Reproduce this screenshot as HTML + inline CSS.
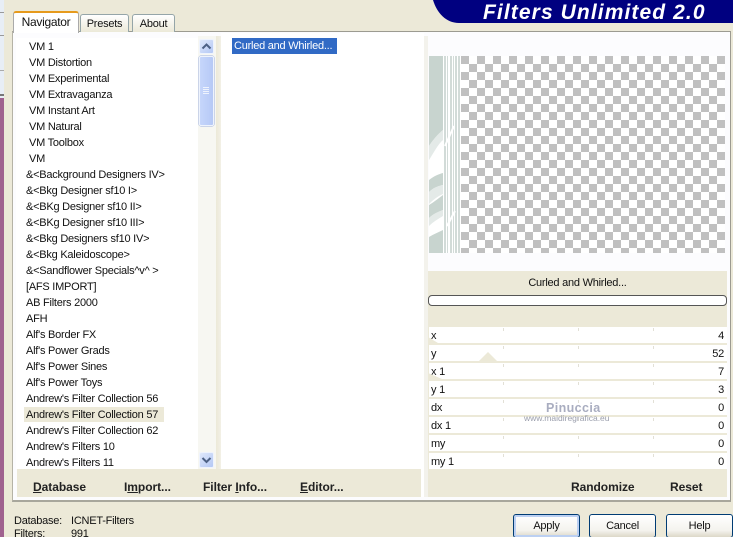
<!DOCTYPE html>
<html style="overflow:hidden"><head><meta charset="utf-8"><style>
html,body{margin:0;padding:0;width:733px;height:537px}
body{overflow:hidden;background:#ece9d8}
#root{position:absolute;left:0;top:0;width:733px;height:537px;overflow:hidden;background:#ece9d8;font-family:"Liberation Sans",sans-serif;font-size:11px;letter-spacing:-.24px;color:#111}
#root div{position:absolute;box-sizing:border-box}
.l{left:0;height:16px;line-height:18px;white-space:nowrap}
.b{font-weight:bold;font-size:12px;letter-spacing:-.05px;white-space:nowrap;top:480px;height:14px;line-height:14px;color:#222}
.r{left:429px;width:298px;height:16px;background:#fff}
.t{position:absolute;left:2px;top:0;line-height:18px}
.v{position:absolute;right:3px;top:0;line-height:18px}
.btn{top:514px;height:24px;border:1px solid #003c74;border-radius:3px;background:linear-gradient(#fff,#f4f3ee 70%,#dcd8c8);text-align:center;line-height:23px;font-size:11px}
.tab{text-align:center;font-size:11px}
u{text-decoration:underline}
</style></head><body><div id="root">
<div style="left:0;top:0;width:4px;height:98px;background:#e8eef6"></div>
<div style="left:0;top:12px;width:4px;height:1px;background:#999"></div>
<div style="left:0;top:35px;width:4px;height:1px;background:#999"></div>
<div style="left:0;top:70px;width:4px;height:1px;background:#aaa"></div>
<div style="left:0;top:94px;width:4px;height:2px;background:#777"></div>
<div style="left:0;top:98px;width:4px;height:439px;background:#a0628f"></div>

<!-- panel -->
<div style="left:12px;top:31px;width:719px;height:471px;background:#fcfcfe;border:1px solid #9c9b91;border-left-color:#b5b3a6;border-bottom:2px solid #a8a79c"></div>
<!-- tabs -->
<div class="tab" style="left:13px;top:11px;width:66px;height:22px;background:#fff;border-left:1px solid #aaa;border-right:1px solid #aaa;border-top:2px solid #e69a1c;border-radius:3px 3px 0 0;line-height:19px;font-size:12px;letter-spacing:-.3px">Navigator</div>
<div class="tab" style="left:80px;top:14px;width:49px;height:18px;background:linear-gradient(#fff,#ece9d8);border:1px solid #95a5a8;border-bottom:0;border-radius:3px 3px 0 0;line-height:18px">Presets</div>
<div class="tab" style="left:132px;top:14px;width:43px;height:18px;background:linear-gradient(#fff,#ece9d8);border:1px solid #95a5a8;border-bottom:0;border-radius:3px 3px 0 0;line-height:18px">About</div>

<!-- banner -->
<svg style="position:absolute;left:432px;top:0" width="301" height="24"><path d="M1 0H301V23H27C14 23 5 13 1 0Z" fill="#000080"/></svg>
<div style="left:483px;top:0;height:24px;line-height:25px;font-size:21px;font-weight:bold;font-style:italic;color:#fff;white-space:nowrap;letter-spacing:1.1px">Filters Unlimited 2.0</div>

<!-- main list -->
<div style="left:16px;top:38px;width:182px;height:431px;overflow:hidden;background:#fff">
<div class="l" style="top:0;padding-left:13px">VM 1</div>
<div class="l" style="top:16px;padding-left:13px">VM Distortion</div>
<div class="l" style="top:32px;padding-left:13px">VM Experimental</div>
<div class="l" style="top:48px;padding-left:13px">VM Extravaganza</div>
<div class="l" style="top:64px;padding-left:13px">VM Instant Art</div>
<div class="l" style="top:80px;padding-left:13px">VM Natural</div>
<div class="l" style="top:96px;padding-left:13px">VM Toolbox</div>
<div class="l" style="top:112px;padding-left:13px">VM</div>
<div class="l" style="top:128px;padding-left:10px">&amp;&lt;Background Designers IV&gt;</div>
<div class="l" style="top:144px;padding-left:10px">&amp;&lt;Bkg Designer sf10 I&gt;</div>
<div class="l" style="top:160px;padding-left:10px">&amp;&lt;BKg Designer sf10 II&gt;</div>
<div class="l" style="top:176px;padding-left:10px">&amp;&lt;BKg Designer sf10 III&gt;</div>
<div class="l" style="top:192px;padding-left:10px">&amp;&lt;Bkg Designers sf10 IV&gt;</div>
<div class="l" style="top:208px;padding-left:10px">&amp;&lt;Bkg Kaleidoscope&gt;</div>
<div class="l" style="top:224px;padding-left:10px">&amp;&lt;Sandflower Specials^v^ &gt;</div>
<div class="l" style="top:240px;padding-left:10px">[AFS IMPORT]</div>
<div class="l" style="top:256px;padding-left:10px">AB Filters 2000</div>
<div class="l" style="top:272px;padding-left:10px">AFH</div>
<div class="l" style="top:288px;padding-left:10px">Alf's Border FX</div>
<div class="l" style="top:304px;padding-left:10px">Alf's Power Grads</div>
<div class="l" style="top:320px;padding-left:10px">Alf's Power Sines</div>
<div class="l" style="top:336px;padding-left:10px">Alf's Power Toys</div>
<div class="l" style="top:352px;padding-left:10px">Andrew's Filter Collection 56</div>
<div style="left:8px;top:369px;width:140px;height:15px;background:#ece9d8"></div>
<div class="l" style="top:368px;padding-left:10px">Andrew's Filter Collection 57</div>
<div class="l" style="top:384px;padding-left:10px">Andrew's Filter Collection 62</div>
<div class="l" style="top:400px;padding-left:10px">Andrew's Filters 10</div>
<div class="l" style="top:416px;padding-left:10px">Andrew's Filters 11</div>
</div>

<!-- scrollbar -->
<div style="left:198px;top:36px;width:18px;height:433px;background:#f7f7f2"></div>
<div style="left:199px;top:39px;width:15px;height:15px;background:linear-gradient(135deg,#dfe8fb,#b4c8f5);border:1px solid #eef3fd;border-radius:2px"></div>
<svg style="position:absolute;left:199px;top:39px" width="15" height="15"><path d="M3.5 9.5L7.5 5.5L11.5 9.5" fill="none" stroke="#4d6185" stroke-width="2"/></svg>
<div style="left:199px;top:56px;width:15px;height:70px;background:linear-gradient(90deg,#c6d6fb,#b6c9f6);border:1px solid #eef3fd;border-radius:2px;box-shadow:0 0 0 .5px #9fb2dd"></div>
<svg style="position:absolute;left:199px;top:56px" width="15" height="70"><path d="M4 31.500H10M4 33.500H10M4 35.500H10M4 37.500H10" stroke="#eef3fd" stroke-width="1"/></svg>
<div style="left:199px;top:452px;width:15px;height:16px;background:linear-gradient(135deg,#dfe8fb,#b4c8f5);border:1px solid #eef3fd;border-radius:2px"></div>
<svg style="position:absolute;left:199px;top:452px" width="15" height="16"><path d="M3.5 6L7.5 10L11.5 6" fill="none" stroke="#4d6185" stroke-width="2"/></svg>
<div style="left:216px;top:36px;width:5px;height:433px;background:linear-gradient(90deg,#ece9d8,#f2f0e6)"></div>

<!-- middle list -->
<div style="left:221px;top:33px;width:200px;height:436px;background:#fff"></div>
<div style="left:232px;top:38px;width:105px;height:16px;background:#316ac5;color:#fff;line-height:17px;padding-left:2px;white-space:nowrap;overflow:hidden">Curled and Whirled...</div>

<!-- bottom button bar -->
<div style="left:17px;top:469px;width:404px;height:28px;background:#ece9d8"></div>
<div class="b" style="left:33px"><u>D</u>atabase</div>
<div class="b" style="left:124px">I<u>m</u>port...</div>
<div class="b" style="left:203px">Filter <u>I</u>nfo...</div>
<div class="b" style="left:300px"><u>E</u>ditor...</div>

<!-- right separator -->
<div style="left:421px;top:33px;width:3px;height:464px;background:#fff"></div>
<div style="left:424px;top:36px;width:4px;height:461px;background:#f3f2ec"></div>

<!-- preview -->
<div style="left:429px;top:56px;width:296px;height:197px;background-color:#fff;background-image:conic-gradient(#c0c0c0 25%,#fff 0 50%,#c0c0c0 0 75%,#fff 0);background-size:16px 16px;background-position:-8px 0"></div>
<svg style="position:absolute;left:429px;top:56px" width="32" height="197" viewBox="0 0 32 197">
<rect width="32" height="197" fill="#fff"/>
<path d="M0 0H14V74C9 78 4 84 0 90Z" fill="#c8d4cf"/>
<path d="M0 90C4 84 9 78 14 74V84C9 88 4 98 0 104Z" fill="#e4eae8"/>
<path d="M0 124C5 120 10 118 14 117V129C9 130 4 132 0 136Z" fill="#c8d4cf"/>
<path d="M0 136C4 132 9 130 14 129V138C9 140 4 144 0 148Z" fill="#e4eae8"/>
<path d="M0 149C5 146 10 142 14 139V154C9 156 4 158 0 162Z" fill="#c8d4cf"/>
<path d="M0 162C4 158 9 156 14 154V160C9 163 4 166 0 170Z" fill="#e4eae8"/>
<path d="M0 181C5 178 10 176 14 174V197H0Z" fill="#c8d4cf"/>
<g fill="#c4d0cb" opacity=".75">
<rect x="15" width="2" height="197"/><rect x="18" width="1" height="197"/><rect x="21" width="2" height="197"/><rect x="24" width="1" height="197"/><rect x="26" width="2" height="197"/><rect x="29" width="2" height="197"/>
</g>
<path d="M16 90L25 70M18 170L26 155" stroke="#fff" stroke-width="2"/>
</svg>

<!-- info -->
<div style="left:428px;top:271px;width:299px;height:56px;background:#ece9d8"></div>
<div style="left:428px;top:276px;width:299px;height:14px;line-height:14px;text-align:center;white-space:nowrap">Curled and Whirled...</div>
<div style="left:428px;top:295px;width:299px;height:11px;background:#fff;border:1px solid #555;border-radius:4px"></div>

<!-- sliders -->
<div style="left:428px;top:327px;width:299px;height:142px;background:#ece9d8"></div>
<div class="r" style="top:327px"><span class="t">x</span><span class="v">4</span></div>
<div class="r" style="top:345px"><span class="t">y</span><span class="v">52</span></div>
<div class="r" style="top:363px"><span class="t">x 1</span><span class="v">7</span></div>
<div class="r" style="top:381px"><span class="t">y 1</span><span class="v">3</span></div>
<div class="r" style="top:399px"><span class="t">dx</span><span class="v">0</span></div>
<div class="r" style="top:417px"><span class="t">dx 1</span><span class="v">0</span></div>
<div class="r" style="top:435px"><span class="t">my</span><span class="v">0</span></div>
<div class="r" style="top:453px"><span class="t">my 1</span><span class="v">0</span></div>
<svg style="position:absolute;left:428px;top:327px" width="299" height="142">
<g fill="#ece9d8"><path d="M0 10L10 16H0Z"/><path d="M60 25L69 34H51Z"/><path d="M0 46L14 52H0Z"/></g>
<g stroke="#e2e0d6"><path d="M75.500 1V4M150.500 1V4M225.500 1V4M75.500 19V22M150.500 19V22M225.500 19V22M75.500 37V40M150.500 37V40M225.500 37V40M75.500 55V58M150.500 55V58M225.500 55V58M75.500 73V76M150.500 73V76M225.500 73V76M75.500 91V94M150.500 91V94M225.500 91V94M75.500 109V112M150.500 109V112M225.500 109V112M75.500 127V130M150.500 127V130M225.500 127V130"/></g>
</svg>
<div style="left:546px;top:400px;font-size:12.500px;font-weight:bold;color:#a9adc0;letter-spacing:.4px;white-space:nowrap;line-height:16px">Pinuccia</div>
<div style="left:524px;top:412px;font-size:8.500px;letter-spacing:0;color:#9a9eac;white-space:nowrap;line-height:12px">www.maidiregrafica.eu</div>

<div style="left:428px;top:469px;width:299px;height:28px;background:#ece9d8"></div>
<div class="b" style="left:571px">Randomize</div>
<div class="b" style="left:670px">Reset</div>

<!-- status -->
<div style="left:14px;top:514px;line-height:14px;white-space:nowrap">Database:</div>
<div style="left:71px;top:514px;line-height:14px;white-space:nowrap">ICNET-Filters</div>
<div style="left:14px;top:527px;line-height:14px;white-space:nowrap">Filters:</div>
<div style="left:71px;top:527px;line-height:14px;white-space:nowrap">991</div>

<!-- buttons -->
<div class="btn" style="left:513px;width:67px;box-shadow:inset 0 0 0 2px #bcd0f2">Apply</div>
<div class="btn" style="left:589px;width:67px">Cancel</div>
<div class="btn" style="left:666px;width:67px">Help</div>
</div></body></html>
